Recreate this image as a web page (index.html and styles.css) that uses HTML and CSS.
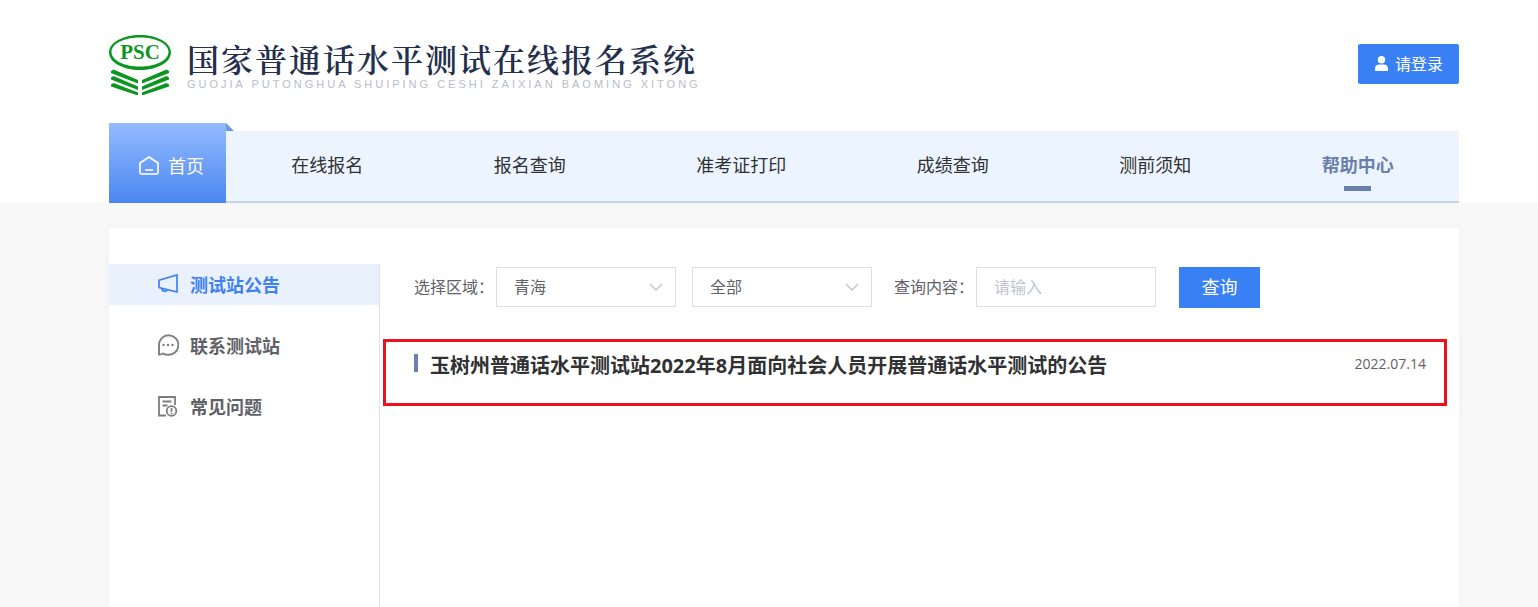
FILE: index.html
```html
<!DOCTYPE html>
<html lang="zh-CN">
<head>
<meta charset="utf-8">
<meta name="viewport" content="width=device-width, initial-scale=1">
<title>国家普通话水平测试在线报名系统</title>
<link rel="stylesheet" href="styles.css">
</head>
<body>
<header class="header">
  <div class="brand-row">
    <a class="brand" href="#">
      <svg class="brand-mark" viewBox="0 0 62 60" aria-label="PSC">
        <path fill="#0b9620" fill-rule="evenodd" d="M31 0C48 0 62 7.500 62 17.500S48 35 31 35 0 27.500 0 17.500 14 0 31 0ZM31 2.500C15.500 2.500 2.500 8.500 2.500 17S15.500 31.500 31 31.500 59.500 25.500 59.500 17 46.500 2.500 31 2.500Z"/>
        <text class="mark-text" x="31" y="24" text-anchor="middle">PSC</text>
        <g fill="#0b9620">
          <path d="M2 36 4.500 34.500 29 45V48.500L2 38ZM2 42.500 4.500 41 29 51.500V55L2 44.500ZM2 49.500 4.500 48 29 57.500V60.500L2 51.500Z"/>
          <path d="M60 36 57.500 34.500 33 45V48.500L60 38ZM60 42.500 57.500 41 33 51.500V55L60 44.500ZM60 49.500 57.500 48 33 57.500V60.500L60 51.500Z"/>
        </g>
      </svg>
      <span class="brand-text">
        <span class="brand-name">国家普通话水平测试在线报名系统</span>
        <span class="brand-pinyin">GUOJIA PUTONGHUA SHUIPING CESHI ZAIXIAN BAOMING XITONG</span>
      </span>
    </a>
    <button class="login" type="button">
      <svg class="login-icon" viewBox="0 0 13 15" fill="#fff"><circle cx="6.500" cy="3.800" r="3.700"/><path d="M0 15v-2.500C0 10 2 8.500 4 8.500h5c2 0 4 1.500 4 4V15Z"/></svg>
      请登录
    </button>
  </div>
  <nav class="nav">
    <a class="nav-home" href="#">
      <svg class="home-icon" viewBox="0 0 20 19" fill="none" stroke="#fff" stroke-width="1.600" stroke-linejoin="round"><path d="M1 7 10 1l9 6v9.500q0 1.500-1.500 1.500h-15Q1 18 1 16.500ZM6 14h8"/></svg>
      首页
      <svg class="fold" viewBox="0 0 8 8"><path fill="#6c96e0" d="M0 0 8 8H0Z"/></svg>
    </a>
    <div class="nav-list">
      <a class="nav-item" href="#">在线报名</a>
      <a class="nav-item" href="#">报名查询</a>
      <a class="nav-item" href="#">准考证打印</a>
      <a class="nav-item" href="#">成绩查询</a>
      <a class="nav-item" href="#">测前须知</a>
      <a class="nav-item nav-current" href="#">帮助中心</a>
    </div>
  </nav>
</header>
<main class="panel">
  <aside class="side">
    <a class="side-item side-current" href="#">
      <svg class="side-icon" viewBox="0 0 22 22" fill="none" stroke="currentColor" stroke-width="1.700"><path d="M2 7.200 20 2v17L2 14.500ZM5 15.300q0 3 2.500 3t2.500-2"/></svg>
      测试站公告
    </a>
    <a class="side-item" href="#">
      <svg class="side-icon" viewBox="0 0 22 22"><path fill="none" stroke="#7d7d80" stroke-width="1.900" d="M2 20.500V11A9.700 9.700 0 1 1 11 20.700Q8 21 6 19.500Q4 20.700 2 20.500Z"/><g fill="#7d7d80"><circle cx="6.500" cy="11" r="1.200"/><circle cx="11" cy="11" r="1.200"/><circle cx="15.500" cy="11" r="1.200"/></g></svg>
      联系测试站
    </a>
    <a class="side-item" href="#">
      <svg class="side-icon" viewBox="0 0 22 22" fill="none" stroke="#7d7d80" stroke-width="1.800"><path d="M9 20.500H2V2h16v8M5.500 6.500h9M5.500 10.500h5"/><circle cx="14.500" cy="16" r="4.800"/><path d="M14.500 13v3.800M14.500 17.800v1.400"/></svg>
      常见问题
    </a>
  </aside>
  <section class="content">
    <form class="filters">
      <label class="label" for="region">选择区域：</label>
      <span class="select-box">
        <select class="field" id="region"><option>青海</option></select>
        <svg class="chevron" viewBox="0 0 14 8"><path d="M1 1l6 6 6-6"/></svg>
      </span>
      <span class="select-box select-station">
        <select class="field" aria-label="测试站"><option>全部</option></select>
        <svg class="chevron" viewBox="0 0 14 8"><path d="M1 1l6 6 6-6"/></svg>
      </span>
      <label class="label" for="keyword">查询内容：</label>
      <input class="field" id="keyword" type="text" placeholder="请输入">
      <button class="search" type="button">查询</button>
    </form>
    <article class="notice">
      <h2 class="notice-title"><a class="notice-link" href="#">玉树州普通话水平测试站2022年8月面向社会人员开展普通话水平测试的公告</a></h2>
      <time class="notice-date" datetime="2022-07-14">2022.07.14</time>
    </article>
  </section>
</main>
</body>
</html>
```
FILE: styles.css
```css
* { box-sizing: border-box; }

body {
  margin: 0;
  min-height: 100vh;
  display: flex;
  flex-direction: column;
  background: #f8f8f8;
  color: #303133;
  font-family: "Open Sans", "Noto Sans CJK SC", sans-serif;
  font-size: 16px;
}

a { color: inherit; text-decoration: none; }
button, input, select { font: inherit; }
svg { display: block; flex: none; }

.header { background: #fff; padding: 35px 79px 0 109px; }

.brand-row {
  display: flex;
  justify-content: space-between;
  align-items: flex-start;
  height: 88px;
}
.brand { display: flex; gap: 16px; }
.brand-mark { width: 62px; height: 60px; }
.mark-text {
  font: bold 21px "Liberation Serif", serif;
  fill: #0b9620;
}
.brand-text { display: flex; flex-direction: column; padding-top: 3px; white-space: nowrap; }
.brand-name {
  font-family: "Noto Serif CJK SC", "Noto Sans CJK SC", serif;
  font-size: 32px;
  font-weight: 600;
  letter-spacing: 2px;
  line-height: 40px;
  color: #232f4b;
}
.brand-pinyin {
  font-family: "Liberation Sans", sans-serif;
  font-size: 11px;
  letter-spacing: 3px;
  line-height: 12px;
  color: #b9bcc4;
}

.login {
  display: flex;
  align-items: center;
  gap: 7px;
  height: 40px;
  margin-top: 9px;
  padding: 0 16px 2px 17px;
  border: 0;
  border-radius: 2px;
  background: #3880f3;
  color: #fff;
}
.login-icon { width: 13px; height: 15px; }

.nav { display: flex; align-items: flex-end; font-size: 18px; }
.nav-home {
  position: relative;
  display: flex;
  align-items: center;
  justify-content: center;
  gap: 9px;
  width: 117px;
  height: 80px;
  padding: 4px 0 0 8px;
  background: linear-gradient(#95bbff, #4a87f0);
  color: #fff;
}
.home-icon { width: 20px; height: 19px; }
.fold { position: absolute; left: 100%; top: 0; width: 8px; height: 8px; }
.nav-list {
  flex: 1;
  display: flex;
  height: 72px;
  background: #ecf5ff;
  border-bottom: 2px solid #c1d4e8;
}
.nav-item {
  position: relative;
  flex: auto;
  text-align: center;
  line-height: 68px;
  white-space: nowrap;
}
.nav-current { color: #6a80aa; font-weight: bold; }
.nav-current::after {
  content: "";
  position: absolute;
  left: calc(50% - 14px);
  bottom: 10px;
  width: 27px;
  height: 5px;
  background: #6a80aa;
}

.panel {
  flex: 1;
  display: flex;
  margin: 25px 79px 0 109px;
  padding-top: 36px;
  background: #fff;
  box-shadow: 0 0 10px rgba(0, 0, 0, 0.04);
}
.side {
  flex: none;
  display: flex;
  flex-direction: column;
  gap: 20px;
  width: 271px;
  border-right: 1px solid #dfe2e8;
}
.side-item {
  display: flex;
  align-items: center;
  gap: 11px;
  height: 41px;
  padding: 0 0 2px 48px;
  color: #606266;
  font-size: 18px;
  font-weight: bold;
}
.side-current { background: #e9f1fd; color: #3f80f5; }
.side-icon { width: 22px; height: 22px; }

.content { flex: 1; padding: 3px 12px 0 3px; }
.filters {
  display: flex;
  align-items: flex-start;
  padding-left: 31px;
  color: #606266;
}
.label { width: 82px; line-height: 40px; white-space: nowrap; }
.select-box { position: relative; display: flex; }
.select-station { margin: 0 22px 0 16px; }
.field {
  appearance: none;
  width: 180px;
  height: 40px;
  padding: 0 17px;
  border: 1px solid #dcdfe6;
  border-radius: 0;
  background: #fff;
  color: #606266;
}
.field::placeholder { color: #c0c4cc; opacity: 1; }
.chevron {
  position: absolute;
  right: 13px;
  top: 16px;
  width: 14px;
  height: 8px;
  pointer-events: none;
  fill: none;
  stroke: #c0c4cc;
  stroke-width: 1.4;
}
.search {
  width: 81px;
  height: 41px;
  margin-left: 23px;
  padding: 0 0 4px;
  border: 0;
  background: #3880f3;
  color: #fff;
  font-size: 18px;
}

.notice {
  display: flex;
  justify-content: space-between;
  align-items: flex-start;
  min-height: 67px;
  margin-top: 31px;
  padding: 12px 18px 12px 28px;
  border: 3px solid #ee111b;
}
.notice-title {
  display: flex;
  align-items: flex-start;
  gap: 12px;
  margin: 0;
  font-size: 20px;
  line-height: 24px;
}
.notice-title::before { content: ""; width: 4px; height: 18px; background: #6a80aa; }
.notice-date { font-size: 14px; line-height: 20px; color: #606266; }
```
